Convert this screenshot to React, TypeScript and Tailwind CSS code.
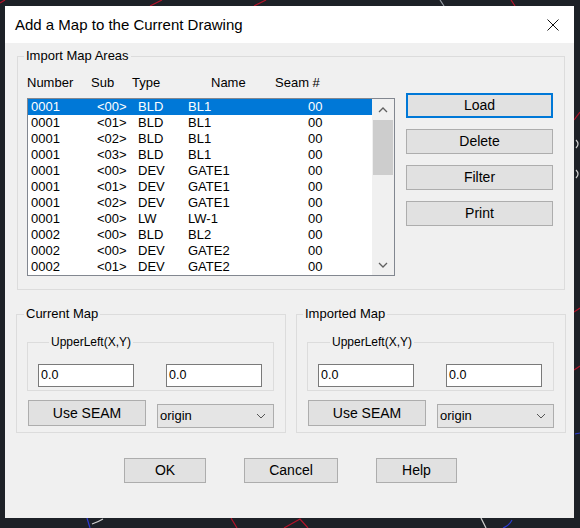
import React from "react";

const ROWS: string[][] = [
  ["0001", "<00>", "BLD", "BL1", "00"],
  ["0001", "<01>", "BLD", "BL1", "00"],
  ["0001", "<02>", "BLD", "BL1", "00"],
  ["0001", "<03>", "BLD", "BL1", "00"],
  ["0001", "<00>", "DEV", "GATE1", "00"],
  ["0001", "<01>", "DEV", "GATE1", "00"],
  ["0001", "<02>", "DEV", "GATE1", "00"],
  ["0001", "<00>", "LW", "LW-1", "00"],
  ["0002", "<00>", "BLD", "BL2", "00"],
  ["0002", "<00>", "DEV", "GATE2", "00"],
  ["0002", "<01>", "DEV", "GATE2", "00"],
];

const btn =
  "bg-[#e1e1e1] border border-[#adadad] text-[14px] font-normal text-black flex items-center justify-center";

function Chevron({ up }: { up?: boolean }) {
  return (
    <svg width="10" height="6" viewBox="0 0 10 6" className="block">
      <polyline
        points={up ? "1,5 5,1 9,5" : "1,1 5,5 9,1"}
        fill="none"
        stroke="#606060"
        strokeWidth="1.3"
      />
    </svg>
  );
}

function Select() {
  return (
    <div className="ml-[11px] mt-[4px] w-[117px] h-[24px] bg-[#e5e5e5] border border-[#adadad] flex items-center justify-between pl-[2px] pr-[7px] text-[13px]">
      <span>origin</span>
      <svg width="10" height="6" viewBox="0 0 10 6" className="block">
        <polyline points="1,1 5,5 9,1" fill="none" stroke="#555" strokeWidth="1" />
      </svg>
    </div>
  );
}

function MapGroup({
  title,
  titleIndent,
  innerIndent,
}: {
  title: string;
  titleIndent: string;
  innerIndent: string;
}) {
  return (
    <fieldset className="w-[270px] h-[127px] border border-[#dcdcdc]">
      <legend className={`${titleIndent} px-[2px] text-[13px] leading-[16px]`}>{title}</legend>
      <fieldset className="ml-[10px] mt-[12px] w-[247px] h-[57px] border border-[#dcdcdc]">
        <legend className={`${innerIndent} px-[2px] text-[12px] leading-[16px]`}>UpperLeft(X,Y)</legend>
        <div className="flex ml-[10px] mt-[14px] gap-[32px]">
          <div className="w-[96px] h-[23px] bg-white border border-[#7a7a7a] text-[12.5px] pl-[2px] flex items-center">
            0.0
          </div>
          <div className="w-[96px] h-[23px] bg-white border border-[#7a7a7a] text-[12.5px] pl-[2px] flex items-center">
            0.0
          </div>
        </div>
      </fieldset>
      <div className="flex items-start ml-[11px] mt-[9px]">
        <button className={`${btn} w-[118px] h-[26px]`}>Use SEAM</button>
        <Select />
      </div>
    </fieldset>
  );
}

export default function App() {
  return (
    <div className="w-[580px] h-[528px] bg-[#1d2127] relative overflow-hidden pl-[5px] pt-[6px] font-['Liberation_Sans',Arial,sans-serif] text-black">
      {/* drawing behind the dialog */}
      <svg className="absolute inset-0" width="580" height="528" viewBox="0 0 580 528">
        <g fill="none" strokeWidth="1.2">
          <line x1="0" y1="3" x2="5" y2="0" stroke="#b3142a" />
          <line x1="150" y1="6" x2="162" y2="0" stroke="#b3142a" />
          <line x1="254" y1="6" x2="266" y2="0" stroke="#b3142a" />
          <line x1="440" y1="0" x2="444" y2="6" stroke="#9aa0a8" />
          <line x1="511" y1="0" x2="515" y2="6" stroke="#b3142a" />
          <line x1="574" y1="120" x2="580" y2="112" stroke="#b3142a" />
          <path d="M576 140 q4 4 0 8 M576 170 q4 4 0 8" stroke="#d0d0d0" />
          <line x1="574" y1="312" x2="580" y2="308" stroke="#b3142a" />
          <line x1="574" y1="370" x2="580" y2="366" stroke="#b3142a" />
          <line x1="575" y1="434" x2="580" y2="433" stroke="#2b3bd0" />
          <line x1="231" y1="518" x2="237" y2="528" stroke="#b3142a" />
          <polyline points="284,528 300,519 308,528" stroke="#b3142a" />
          <path d="M92 524 q6 -2 11 -5" stroke="#d0d0d0" />
          <line x1="87" y1="518" x2="90" y2="528" stroke="#2b3bd0" />
          <line x1="481" y1="518" x2="486" y2="528" stroke="#d0d0d0" />
          <path d="M503 528 q6 -2 9 -8" stroke="#2b3bd0" />
        </g>
      </svg>

      <div className="relative w-[569px] h-[512px] flex flex-col bg-[#f0f0f0]">
        {/* title bar */}
        <div className="h-[37px] bg-white flex items-center justify-between pl-[10px] pr-[15px]">
          <span className="text-[15px] leading-none">Add a Map to the Current Drawing</span>
          <svg width="12" height="12" viewBox="0 0 12 12" className="block">
            <path d="M0.5 0.5 L11.5 11.5 M11.5 0.5 L0.5 11.5" stroke="#111" strokeWidth="1" />
          </svg>
        </div>

        <div className="flex-1 pt-[5px]">
          {/* Import Map Areas */}
          <fieldset className="ml-[12px] w-[548px] h-[242px] border border-[#dcdcdc]">
            <legend className="ml-[6px] px-[2px] text-[13px] leading-[16px]">Import Map Areas</legend>
            <div className="flex items-start">
              <div className="ml-[9px] mt-[11px]">
                <div className="flex h-[16px] items-center text-[13px]">
                  <span className="w-[64px]">Number</span>
                  <span className="w-[41px]">Sub</span>
                  <span className="w-[79px]">Type</span>
                  <span className="w-[64px]">Name</span>
                  <span>Seam #</span>
                </div>
                <div className="mt-[7px] w-[368px] h-[178px] border border-[#828790] bg-white flex overflow-hidden">
                  <div className="w-[344px]">
                    {ROWS.map((r, i) => (
                      <div
                        key={i}
                        className={`flex h-[16px] items-center pl-[3px] text-[13px] ${
                          i === 0 ? "bg-[#0078d7] text-white" : "text-black"
                        }`}
                      >
                        <span className="w-[66px]">{r[0]}</span>
                        <span className="w-[41px]">{r[1]}</span>
                        <span className="w-[50px]">{r[2]}</span>
                        <span className="w-[120px]">{r[3]}</span>
                        <span>{r[4]}</span>
                      </div>
                    ))}
                  </div>
                  <div className="flex-1 bg-[#f0f0f0] flex flex-col">
                    <div className="h-[21px] flex items-center justify-center">
                      <Chevron up />
                    </div>
                    <div className="h-[55px] mx-[1px] bg-[#cdcdcd]" />
                    <div className="flex-1" />
                    <div className="h-[21px] flex items-center justify-center">
                      <Chevron />
                    </div>
                  </div>
                </div>
              </div>
              <div className="ml-[11px] mt-[29px] flex flex-col gap-[11px]">
                <button className="bg-[#e1e1e1] border-2 border-[#0078d7] text-[14px] font-normal w-[147px] h-[25px] flex items-center justify-center">
                  Load
                </button>
                <button className={`${btn} w-[147px] h-[25px]`}>Delete</button>
                <button className={`${btn} w-[147px] h-[25px]`}>Filter</button>
                <button className={`${btn} w-[147px] h-[25px]`}>Print</button>
              </div>
            </div>
          </fieldset>

          {/* Current / Imported map */}
          <div className="flex ml-[11px] mt-[16px] gap-[10px]">
            <MapGroup title="Current Map" titleIndent="ml-[7px]" innerIndent="ml-[21px]" />
            <MapGroup title="Imported Map" titleIndent="ml-[6px]" innerIndent="ml-[22px]" />
          </div>

          {/* dialog buttons */}
          <div className="flex ml-[119px] mt-[25px] gap-[38px]">
            <button className={`${btn} w-[82px] h-[25px]`}>OK</button>
            <button className={`${btn} w-[94px] h-[25px]`}>Cancel</button>
            <button className={`${btn} w-[81px] h-[25px]`}>Help</button>
          </div>
        </div>
      </div>
    </div>
  );
}
